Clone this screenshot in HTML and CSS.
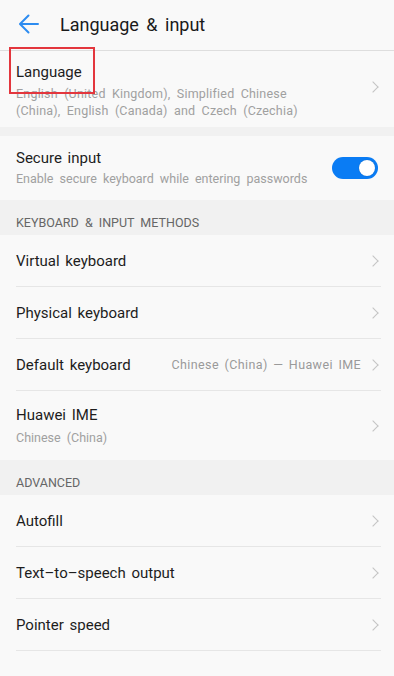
FILE: index.html
```html
<!DOCTYPE html>
<html lang="en">
<head>
  <meta charset="UTF-8">
  <title>Language &amp; input</title>
  <link rel="stylesheet" href="styles.css">
</head>
<body>
  <div class="header">
    <svg class="back" width="24" height="24" viewBox="0 0 24 24">
      <path d="M21 12H3.5M11.5 3.5L3 12l8.5 8.5" fill="none" stroke="#2d8cf0" stroke-width="2" stroke-linecap="round" stroke-linejoin="round"/>
    </svg>
    <h1>Language &amp; input</h1>
  </div>

  <div class="item lang">
    <div class="text">
      <div class="title">Language</div>
      <div class="sub wide">English (United Kingdom), Simplified Chinese (China), English (Canada) and Czech (Czechia)</div>
    </div>
    <span class="chev"></span>
    <div class="highlight"></div>
  </div>

  <div class="gap"></div>

  <div class="item secure">
    <div class="text">
      <div class="title">Secure input</div>
      <div class="sub">Enable secure keyboard while entering passwords</div>
    </div>
    <span class="toggle"><span class="knob"></span></span>
  </div>

  <div class="section">KEYBOARD &amp; INPUT METHODS</div>

  <div class="item line">
    <div class="text"><div class="title">Virtual keyboard</div></div>
    <span class="chev"></span>
  </div>
  <div class="item line">
    <div class="text"><div class="title">Physical keyboard</div></div>
    <span class="chev"></span>
  </div>
  <div class="item line">
    <div class="text"><div class="title">Default keyboard</div></div>
    <span class="value">Chinese (China) — Huawei IME</span>
    <span class="chev"></span>
  </div>
  <div class="item ime">
    <div class="text">
      <div class="title">Huawei IME</div>
      <div class="sub">Chinese (China)</div>
    </div>
    <span class="chev"></span>
  </div>

  <div class="section">ADVANCED</div>

  <div class="item line">
    <div class="text"><div class="title">Autofill</div></div>
    <span class="chev"></span>
  </div>
  <div class="item line">
    <div class="text"><div class="title">Text–to–speech output</div></div>
    <span class="chev"></span>
  </div>
  <div class="item line">
    <div class="text"><div class="title">Pointer speed</div></div>
    <span class="chev"></span>
  </div>
</body>
</html>
```

FILE: styles.css
```css
body, html { margin: 0; padding: 0; background: #f9f9f9; font-family: Roboto, "Noto Sans", sans-serif; color: #1a1a1a; }
.header { height: 50px; display: flex; align-items: center; border-bottom: 1px solid #dedede; }
.back { margin-left: 17px; margin-top: -2px; }
h1 { margin: -2px 0 0 19px; font-size: 18px; font-weight: 400; word-spacing: 3px; color: #1a1a1a; }

.item { display: flex; align-items: center; margin: 0 13px 0 16px; position: relative; }
.item.line { height: 51px; border-bottom: 1px solid #e6e6e6; }
.text { flex: 1; min-width: 0; }
.title { font-size: 15px; line-height: 20px; word-spacing: 2px; color: #1d1d1d; }
.sub { font-size: 12.5px; line-height: 17px; color: #a0a0a0; word-spacing: 3px; }
.sub.wide { letter-spacing: 0.2px; }

.lang { height: 76px; align-items: flex-start; }
.lang .text { padding-top: 11px; padding-right: 40px; }
.lang .title { margin-bottom: 3px; }
.lang .chev { margin-top: 32px; }

.gap { height: 9px; background: #f1f1f1; }

.secure { height: 64px; }
.secure .title { margin-bottom: 2px; margin-top: -1px; }

.toggle { width: 46px; height: 22px; border-radius: 11px; background: #0a7cf4; position: relative; margin-right: 3px; flex: none; }
.knob { position: absolute; right: 3px; top: 3px; width: 16px; height: 16px; border-radius: 50%; background: #fff; box-shadow: 0 0 1px rgba(0,0,0,0.3); }

.section { height: 35px; background: #f1f1f1; padding: 15px 16px 0; font-size: 12.5px; color: #666; line-height: 15px; box-sizing: border-box; word-spacing: 3px; }

.ime { height: 69px; }
.ime .title { margin-bottom: 4px; }

.value { font-size: 12.5px; color: #9a9a9a; margin-right: 8px; word-spacing: 2px; letter-spacing: 0.4px; white-space: nowrap; }

.chev { width: 7px; height: 7px; border-top: 1px solid #c4c4c4; border-right: 1px solid #c4c4c4; transform: rotate(45deg); margin-right: 4px; flex: none; }

.highlight { position: absolute; left: -7px; top: -4px; width: 82px; height: 43px; border: 2px solid #e3363d; }
```
